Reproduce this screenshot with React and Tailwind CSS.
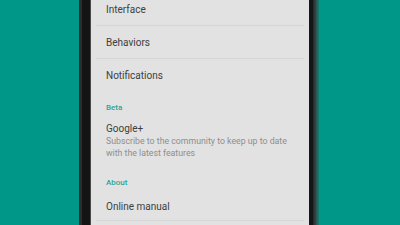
export default function App() {
  const font = { fontFamily: 'Roboto, "Noto Sans", sans-serif' }

  return (
    <div className="w-[400px] h-[225px] overflow-hidden bg-[#009789] flex pl-[79px]" style={font}>
      {/* Phone frame, left */}
      <div className="w-[3px] h-full bg-[#2c2c2c]" />
      <div className="w-[8px] h-full bg-[#141414]" />
      <div className="w-[1px] h-full bg-[#4a4a4a]" />

      {/* Screen */}
      <div className="w-[218px] h-full bg-[#e2e2e2] overflow-hidden">
        <div className="-mt-[7px]">
          <div className="mx-[5px] h-[33px] pl-[10px] flex items-center border-b border-[#d6d6d6] text-[10px] text-[#404040]">
            Interface
          </div>
          <div className="mx-[5px] h-[33px] pl-[10px] flex items-center border-b border-[#d6d6d6] text-[10px] text-[#404040]">
            Behaviors
          </div>
          <div className="mx-[5px] h-[33px] pl-[10px] flex items-center text-[10px] text-[#404040]">
            Notifications
          </div>

          {/* Beta */}
          <div className="mx-[5px] pl-[10px] pt-[11px] pb-[4px] text-[8px] leading-[10px] font-medium text-[#2aa596]">
            Beta
          </div>
          <div className="mx-[5px] pl-[10px] pt-[6px] pb-[8px]">
            <div className="text-[10px] leading-[12px] text-[#404040]">Google+</div>
            <div className="text-[8.75px] leading-[12px] text-[#8e8e8e]">
              Subscribe to the community to keep up to date
              <br />
              with the latest features
            </div>
          </div>

          {/* About */}
          <div className="mx-[5px] pl-[10px] pt-[11px] pb-[4px] text-[8px] leading-[10px] font-medium text-[#2aa596]">
            About
          </div>
          <div className="mx-[5px] h-[29px] pl-[10px] flex items-center border-b border-[#d6d6d6] text-[10px] text-[#404040]">
            Online manual
          </div>
        </div>
      </div>

      {/* Phone frame, right */}
      <div className="w-[4px] h-full bg-[#161616]" />
      <div className="w-[6px] h-full bg-gradient-to-r from-[#262626] to-[#0b7f73]" />
    </div>
  )
}
